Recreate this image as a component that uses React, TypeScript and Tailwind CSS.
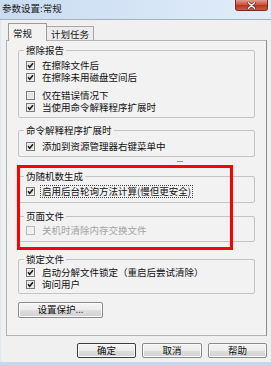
import React from "react";
import clsx from "clsx";

// Win7 style checkbox, drawn small to match the downscaled dialog
function CheckBox({ checked, disabled }: { checked?: boolean; disabled?: boolean }) {
  return (
    <svg width="9" height="9" viewBox="0 0 9 9" className="shrink-0">
      <rect x="0.5" y="0.5" width="8" height="8" fill={disabled ? "#f4f4f4" : "#f6f6f6"} stroke={disabled ? "#b8b8b8" : "#7a7a7a"} />
      <rect x="1.5" y="1.5" width="6" height="6" fill={disabled ? "#f0f0f0" : "#e4e4e4"} />
      {checked && (
        <path d="M2 4.3 L3.7 6.3 L7 2.2" fill="none" stroke="#1c1c1c" strokeWidth="1.5" />
      )}
    </svg>
  );
}

function Row({
  label,
  checked,
  disabled,
  focus,
  className,
}: {
  label: string;
  checked?: boolean;
  disabled?: boolean;
  focus?: boolean;
  className?: string;
}) {
  return (
    <div className={clsx("flex items-center h-[12px] gap-[5px]", className)}>
      <CheckBox checked={checked} disabled={disabled} />
      <span
        className={clsx(
          "whitespace-nowrap leading-[11px]",
          disabled ? "text-[#a3a3a3]" : "text-[#111]",
          focus ? "border border-dotted border-[#444] px-[1px]" : "border border-transparent px-[1px]"
        )}
      >
        {label}
      </span>
    </div>
  );
}

function Group({
  title,
  children,
  className,
}: {
  title: string;
  children: React.ReactNode;
  className?: string;
}) {
  return (
    <fieldset className={clsx("m-0 min-w-0 w-[237px] border border-[#c4c4c4] rounded-[2px] pl-[7px] pr-1", className)}>
      <legend className="-ml-[2px] px-[2px] leading-[12px] text-[#111]">{title}</legend>
      {children}
    </fieldset>
  );
}

function WinButton({ children, primary, className }: { children: React.ReactNode; primary?: boolean; className?: string }) {
  return (
    <button
      className={clsx(
        "rounded-[2px] border bg-[linear-gradient(#f4f4f4_0%,#ececec_50%,#dedede_51%,#d2d2d2_100%)] text-[9.5px] leading-none text-[#111] shadow-[inset_0_0_0_1px_#fbfbfb]",
        primary ? "border-[#3d3d3d]" : "border-[#8a8a8a]",
        className
      )}
    >
      {children}
    </button>
  );
}

export default function App() {
  return (
    <div className="relative w-[271px] h-[366px] flex flex-col bg-[#f0f0f0] overflow-hidden font-['Noto_Sans_CJK_SC','Noto_Sans',sans-serif] text-[9.5px]">
      {/* title bar */}
      <div className="relative h-[20px] shrink-0 border-b border-[#9fb2c8] bg-[linear-gradient(90deg,#c9dcf1,#d7e6f7_60%,#e2edf9)]">
        <span className="absolute left-[2px] top-[2px] leading-[12px] text-[#1a1a1a]">参数设置:常规</span>
        <div className="absolute right-[3px] top-0 w-[33px] h-[11px] rounded-b-[3px] border border-t-0 border-[#7e2a22] bg-[linear-gradient(#e59a8c,#cd5443_45%,#b83624_55%,#d05a40)] flex items-center justify-center">
          <svg width="9" height="7" viewBox="0 0 9 7">
            <path d="M1.5 0.8 L7.5 6.2 M7.5 0.8 L1.5 6.2" stroke="#5a1b14" strokeWidth="2.6" strokeLinecap="round" />
            <path d="M1.5 0.8 L7.5 6.2 M7.5 0.8 L1.5 6.2" stroke="#fff" strokeWidth="1.5" strokeLinecap="round" />
          </svg>
        </div>
      </div>

      {/* body */}
      <div className="flex flex-col flex-1 pl-[5px] pr-[4px] pt-[3px] border-l border-[#dfe7f0]">
        {/* tabs */}
        <div className="flex items-end h-[17px] pl-[2px]">
          <div className="relative z-10 -mb-[1px] h-[18px] w-[39px] border border-b-0 border-[#9a9a9a] bg-[#f2f2f2] pl-[4px] pt-[3px] leading-[12px] text-[#111]">
            常规
          </div>
          <div className="h-[14px] w-[47px] border border-l-0 border-b-0 border-[#a8a8a8] bg-[#ececec] flex items-center justify-center leading-[12px] text-[#111]">
            计划任务
          </div>
        </div>

        {/* tab panel */}
        <div className="relative h-[296px] border border-[#b3b3b3] border-r-[#8c8c8c] bg-[#f2f2f2] pl-[11px] pt-[3px]">
          <Group title="擦除报告" className="pb-[4px]">
            <Row label="在擦除文件后" checked className="mt-[3px]" />
            <Row label="在擦除未用磁盘空间后" checked />
            <Row label="仅在错误情况下" className="mt-[6px]" />
            <Row label="当使用命令解释程序扩展时" checked />
          </Group>

          <Group title="命令解释程序扩展时" className="mt-[6px] pb-[4px]">
            <Row label="添加到资源管理器右键菜单中" checked className="mt-[4px]" />
          </Group>

          <Group title="伪随机数生成" className="mt-[13px] pb-[5px]">
            <Row label="启用后台轮询方法计算(慢但更安全)" checked focus className="mt-[3px]" />
          </Group>

          <Group title="页面文件" className="mt-[7px] pb-[5px]">
            <Row label="关机时清除内存交换文件" disabled className="mt-[2px]" />
          </Group>

          <Group title="锁定文件" className="mt-[11px] pb-[3px]">
            <Row label="启动分解文件锁定（重启后尝试清除）" checked className="mt-[1px]" />
            <Row label="询问用户" checked />
          </Group>

          <WinButton className="mt-[8px] w-[85px] h-[16px]">设置保护...</WinButton>
        </div>

        {/* dialog buttons */}
        <div className="flex justify-end gap-[6px] mt-[7px] pr-[0px]">
          <WinButton primary className="w-[59px] h-[15px]">确定</WinButton>
          <WinButton className="w-[60px] h-[15px]">取消</WinButton>
          <WinButton className="w-[59px] h-[15px]">帮助</WinButton>
        </div>
      </div>

      {/* bottom frame */}
      <div className="h-[4px] shrink-0 bg-[#c3d7ed]" />

      {/* red annotation over the dialog */}
      <div className="absolute left-[17px] top-[165px] w-[216px] h-[85px] border-[3px] border-[#ff0000] pointer-events-none" />
      <div className="absolute left-[177px] top-[161px] w-[6px] h-[1px] bg-[#f26a6a] pointer-events-none" />
    </div>
  );
}
